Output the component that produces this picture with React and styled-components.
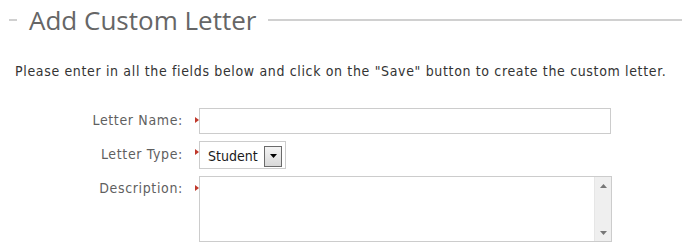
import React from "react";
import styled, { createGlobalStyle } from "styled-components";

const GlobalStyle = createGlobalStyle`
  html, body {
    margin: 0;
    padding: 0;
    background: #fff;
  }
  body {
    font-family: "DejaVu Sans Condensed", "DejaVu Sans", sans-serif;
  }
`;

const Page = styled.div`
  width: 682px;
  height: 250px;
  overflow: hidden;
`;

const Legend = styled.div`
  display: flex;
  align-items: center;
  gap: 12px;
  height: 40px;
  padding-left: 9px;
`;

const Rule = styled.span`
  height: 2px;
  background: #d0d0d0;
  width: ${(p) => (p.grow ? "auto" : "8px")};
  flex: ${(p) => (p.grow ? "1" : "none")};
`;

const Title = styled.h1`
  margin: 0;
  font-family: "Open Sans", sans-serif;
  font-weight: 400;
  font-size: 26px;
  color: #666;
  line-height: 40px;
`;

const Intro = styled.p`
  margin: 23px 0 0 15px;
  font-size: 14px;
  letter-spacing: 0.65px;
  color: #333;
  line-height: 17px;
`;

const Form = styled.div`
  display: grid;
  grid-template-columns: 183px 16px 412px;
  row-gap: 7px;
  margin-top: 28px;
  align-items: start;
`;

const Label = styled.label`
  text-align: right;
  font-size: 14px;
  letter-spacing: 0.65px;
  color: #5f5f5f;
  padding-top: ${(p) => p.top || "4px"};
`;

const Required = styled.span`
  width: 0;
  height: 0;
  margin: ${(p) => p.top || "9px"} 0 0 12px;
  border-top: 3px solid transparent;
  border-bottom: 3px solid transparent;
  border-left: 4px solid #c0392b;
`;

const TextInput = styled.input`
  box-sizing: border-box;
  width: 412px;
  height: 26px;
  border: 1px solid #ccc;
  margin: 0;
  padding: 2px 4px;
  font: inherit;
  outline: none;
`;

const SelectBox = styled.div`
  box-sizing: border-box;
  width: 87px;
  height: 28px;
  border: 1px solid #ccc;
  display: flex;
  align-items: center;
  padding: 0 3px 0 8px;
  gap: 3px;
  font-size: 14px;
  color: #1a1a1a;
`;

const SelectText = styled.span`
  flex: 1;
  padding-top: 2px;
`;

const DropButton = styled.span`
  box-sizing: border-box;
  width: 18px;
  height: 21px;
  border: 1px solid #6a6a6a;
  background: linear-gradient(#f4f4f4, #d8d8d8);
  display: flex;
  align-items: center;
  justify-content: center;
  margin-top: 2px;
`;

const AreaBox = styled.div`
  box-sizing: border-box;
  width: 413px;
  height: 66px;
  border: 1px solid #ccc;
  display: flex;
`;

const TextArea = styled.textarea`
  flex: 1;
  border: none;
  resize: none;
  outline: none;
  margin: 0;
  padding: 2px 4px;
  font: inherit;
`;

const ScrollTrack = styled.div`
  width: 16px;
  background: #efefef;
  border-left: 1px solid #e6e6e6;
  display: flex;
  flex-direction: column;
  justify-content: space-between;
  align-items: center;
  padding: 7px 0 6px;
`;

const Arrow = ({ down }) => (
  <svg width="7" height="4" viewBox="0 0 7 4">
    <path d={down ? "M0 0H7L3.5 4Z" : "M0 4H7L3.5 0Z"} fill="#777" />
  </svg>
);

export default function App() {
  return (
    <Page>
      <GlobalStyle />
      <Legend>
        <Rule />
        <Title>Add Custom Letter</Title>
        <Rule grow />
      </Legend>
      <Intro>
        Please enter in all the fields below and click on the "Save" button to
        create the custom letter.
      </Intro>
      <Form>
        <Label htmlFor="name" top="4px">Letter Name:</Label>
        <Required top="9px" />
        <TextInput id="name" type="text" />

        <Label top="5px">Letter Type:</Label>
        <Required top="8px" />
        <SelectBox>
          <SelectText>Student</SelectText>
          <DropButton>
            <svg width="7" height="4" viewBox="0 0 7 4">
              <path d="M0 0H7L3.5 4Z" fill="#000" />
            </svg>
          </DropButton>
        </SelectBox>

        <Label htmlFor="desc" top="4px">Description:</Label>
        <Required top="9px" />
        <AreaBox>
          <TextArea id="desc" />
          <ScrollTrack>
            <Arrow />
            <Arrow down />
          </ScrollTrack>
        </AreaBox>
      </Form>
    </Page>
  );
}
